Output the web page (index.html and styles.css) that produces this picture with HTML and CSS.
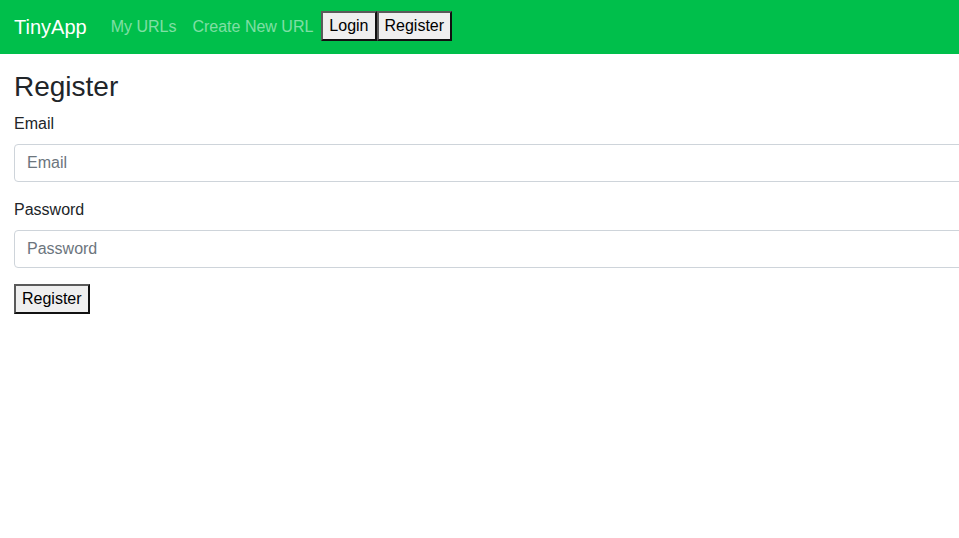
FILE: index.html
```html
<!DOCTYPE html>
<html lang="en">
<head>
<meta charset="utf-8">
<title>TinyApp - Register</title>
<link rel="stylesheet" href="styles.css">
</head>
<body>
<nav class="navbar">
  <a class="brand" href="#">TinyApp</a>
  <a class="nav-link" href="#">My URLs</a>
  <a class="nav-link" href="#">Create New URL</a>
  <button class="btn btn-nav" type="button">Login</button>
  <button class="btn btn-nav" type="button">Register</button>
</nav>
<main class="main">
  <h3 class="title">Register</h3>
  <form class="form">
    <div class="form-group">
      <label class="label" for="email">Email</label>
      <input class="input" id="email" type="text" placeholder="Email">
    </div>
    <div class="form-group">
      <label class="label" for="password">Password</label>
      <input class="input" id="password" type="password" placeholder="Password">
    </div>
    <button class="btn" type="submit">Register</button>
  </form>
</main>
</body>
</html>
```
FILE: styles.css
```css
* { box-sizing: border-box; }
html, body { margin: 0; padding: 0; }
body {
  font-family: "Liberation Sans", Arial, sans-serif;
  font-size: 16px;
  line-height: 1.5;
  color: #212529;
  background: #fff;
  overflow-x: hidden;
}
.navbar {
  display: flex;
  align-items: center;
  height: 54px;
  padding: 8px 14px;
  background: #00bf4b;
}
.brand {
  font-size: 20px;
  line-height: 30px;
  color: #fff;
  text-decoration: none;
  margin-right: 16px;
}
.nav-link {
  color: rgba(255, 255, 255, 0.5);
  text-decoration: none;
  padding: 8px;
  line-height: 24px;
}
.btn {
  font-family: "Liberation Sans", Arial, sans-serif;
  font-size: 16px;
  line-height: 24px;
  height: 30px;
  padding: 1px 6px;
  margin: 0;
  color: #000;
  background: #efefef;
  border: 2px solid;
  border-color: #5a5a5a #111 #111 #5a5a5a;
  border-radius: 0;
}
.btn-nav {
  margin-bottom: 2px;
}
.main {
  padding: 0 0 0 14px;
  overflow: hidden;
}
.title {
  margin: 16px 0 8px;
  font-size: 28px;
  font-weight: 500;
  line-height: 1.2;
}
.form-group {
  margin-bottom: 16px;
}
.label {
  display: block;
  margin-bottom: 8px;
}
.input {
  display: block;
  width: 1000px;
  height: 38px;
  padding: 6px 12px;
  font-family: "Liberation Sans", Arial, sans-serif;
  font-size: 16px;
  line-height: 1.5;
  color: #495057;
  background: #fff;
  border: 1px solid #ced4da;
  border-radius: 4px;
}
.input::placeholder {
  color: #6c757d;
}
```
